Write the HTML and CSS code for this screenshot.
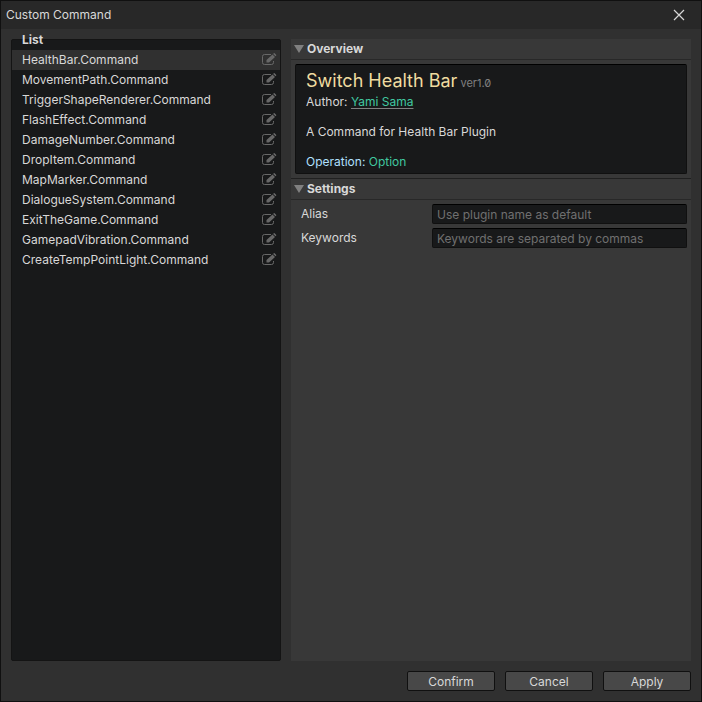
FILE: index.html
```html
<!DOCTYPE html>
<html lang="en">
<head>
    <meta charset="UTF-8">
    <meta name="viewport" content="width=device-width, initial-scale=1.0">
    <title>Custom Command</title>
    <link rel="stylesheet" href="styles.css">
</head>
<body>
    <svg class="defs" width="0" height="0">
        <symbol id="edit" viewBox="0 0 16 14">
            <path d="M9 1.500H2.500Q.5 1.500 .5 3.500V9.500Q.5 11.500 2.500 11.500H9.500Q11.500 11.500 11.500 9.500V8" fill="none" stroke="currentColor"/>
            <path d="M4.500 9.500V7L10.500 1.500L13 4L7 9.500ZM11.100 .9L11.800 .2Q12.200 0 12.600 .3L14.100 1.800Q14.500 2.200 14.100 2.700L13.500 3.300Z" fill="currentColor"/>
        </symbol>
    </svg>

    <div class="window">
        <header class="title-bar">
            <h1>Custom Command</h1>
            <button class="close" aria-label="Close">
                <svg width="12" height="12" viewBox="0 0 12 12"><path d="M1 1L11 11M11 1L1 11" stroke="currentColor" stroke-width="1.2"/></svg>
            </button>
        </header>

        <main class="content">
            <section class="list">
                <h2>List</h2>
                <ul>
                    <li class="selected">HealthBar.Command <button aria-label="Edit"><svg><use href="#edit"/></svg></button></li>
                    <li>MovementPath.Command <button aria-label="Edit"><svg><use href="#edit"/></svg></button></li>
                    <li>TriggerShapeRenderer.Command <button aria-label="Edit"><svg><use href="#edit"/></svg></button></li>
                    <li>FlashEffect.Command <button aria-label="Edit"><svg><use href="#edit"/></svg></button></li>
                    <li>DamageNumber.Command <button aria-label="Edit"><svg><use href="#edit"/></svg></button></li>
                    <li>DropItem.Command <button aria-label="Edit"><svg><use href="#edit"/></svg></button></li>
                    <li>MapMarker.Command <button aria-label="Edit"><svg><use href="#edit"/></svg></button></li>
                    <li>DialogueSystem.Command <button aria-label="Edit"><svg><use href="#edit"/></svg></button></li>
                    <li>ExitTheGame.Command <button aria-label="Edit"><svg><use href="#edit"/></svg></button></li>
                    <li>GamepadVibration.Command <button aria-label="Edit"><svg><use href="#edit"/></svg></button></li>
                    <li>CreateTempPointLight.Command <button aria-label="Edit"><svg><use href="#edit"/></svg></button></li>
                </ul>
            </section>

            <section class="detail">
                <details open>
                    <summary>Overview</summary>
                    <div class="overview">
                        <h3>Switch Health Bar <small>ver1.0</small></h3>
                        <p>Author: <a href="#">Yami Sama</a></p>
                        <p class="block">A Command for Health Bar Plugin</p>
                        <p class="block operation">Operation: <span>Option</span></p>
                    </div>
                </details>
                <details open>
                    <summary>Settings</summary>
                    <div class="settings">
                        <label for="alias">Alias</label>
                        <input type="text" id="alias" placeholder="Use plugin name as default">
                        <label for="keywords">Keywords</label>
                        <input type="text" id="keywords" placeholder="Keywords are separated by commas">
                    </div>
                </details>
            </section>
        </main>

        <footer class="buttons">
            <button class="button">Confirm</button>
            <button class="button">Cancel</button>
            <button class="button">Apply</button>
        </footer>
    </div>
</body>
</html>
```
FILE: styles.css
```css
* {
    box-sizing: border-box;
    margin: 0;
    padding: 0;
}

body {
    font-family: Inter, "Liberation Sans", sans-serif;
    font-size: 12px;
    line-height: 20px;
    color: #d8d8d8;
    background: #303030;
}

button,
input {
    font: inherit;
    color: inherit;
}

.defs {
    position: absolute;
}

.window {
    display: flex;
    flex-direction: column;
    min-height: 100vh;
    border: 1px solid #101010;
    background: #303030;
}

.title-bar {
    display: flex;
    justify-content: space-between;
    align-items: center;
    height: 28px;
    padding-left: 5px;
    background: #282828;
}

.title-bar h1 {
    font-size: 12px;
    font-weight: 400;
}

.close {
    display: flex;
    justify-content: center;
    align-items: center;
    width: 44px;
    height: 28px;
    border: none;
    background: none;
}

.content {
    flex: 1;
    display: grid;
    grid-template-columns: 27fr 40fr;
    gap: 10px;
    padding: 10px;
}

.list {
    border: 1px solid #141414;
    border-radius: 2px;
    background: #18191a;
}

.list h2 {
    margin-top: -10px;
    padding-left: 10px;
    font-size: 12px;
    font-weight: 700;
}

.list ul {
    list-style: none;
}

.list li {
    display: flex;
    justify-content: space-between;
    align-items: center;
    height: 20px;
    padding: 0 2px 0 10px;
}

.list .selected {
    background: #303030;
}

.list button {
    display: flex;
    border: none;
    background: none;
    color: #686868;
}

.list svg {
    width: 16px;
    height: 14px;
}

.detail {
    background: #383838;
}

details + details {
    border-top: 1px solid #202020;
}

summary {
    display: flex;
    align-items: center;
    gap: 3px;
    height: 21px;
    padding-left: 3px;
    border-bottom: 1px solid #282828;
    font-weight: 700;
}

summary::before {
    content: "";
    border: 5px solid transparent;
    border-top: 8px solid #808080;
    border-bottom: none;
}

.overview {
    margin: 4px;
    padding: 4px 10px 1px;
    border: 1px solid #101010;
    border-top-color: #000000;
    border-radius: 2px;
    background: #18191a;
}

.overview h3 {
    font-size: 18px;
    font-weight: 400;
    line-height: 23px;
    color: #f0dca0;
}

.overview small {
    margin-left: -2px;
    font-size: 11px;
    line-height: 1;
    font-feature-settings: "zero";
    color: #808080;
}

.overview a,
.overview span {
    color: #40c8a0;
}

.overview a {
    text-decoration-color: #808080;
    text-underline-offset: 2px;
}

.overview .block {
    margin-top: 10px;
}

.overview .operation {
    color: #b0e0ff;
}

.settings {
    display: grid;
    grid-template-columns: 131px 1fr;
    gap: 4px 0;
    padding: 4px 4px 4px 10px;
}

.settings input {
    width: 100%;
    height: 20px;
    padding: 1px 4px 0;
    border: 1px solid #101010;
    border-top-color: #000000;
    border-radius: 2px;
    background: #18191a;
}

.settings input::placeholder {
    color: #707070;
}

.buttons {
    display: flex;
    justify-content: flex-end;
    gap: 10px;
    padding: 0 10px 10px;
}

.button {
    width: 88px;
    height: 20px;
    border: 1px solid #101010;
    border-radius: 2px;
    background: #484848;
    line-height: 20px;
}
```
